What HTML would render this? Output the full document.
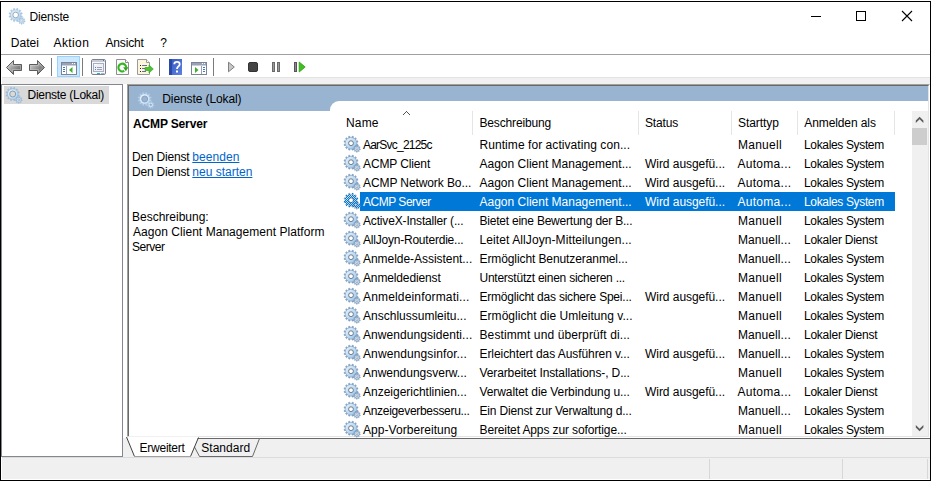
<!DOCTYPE html><html lang="de"><head><meta charset="utf-8"><title>Dienste</title><style>
html,body{margin:0;padding:0}
body{width:932px;height:481px;overflow:hidden;background:#fff;position:relative;font-family:"Liberation Sans",sans-serif;font-size:12px;color:#000}
div,span,svg,a{position:absolute;box-sizing:border-box}
.tx{white-space:nowrap;line-height:16px;height:16px;color:#000;text-decoration:none}
.b{font-weight:bold}
.lnk{color:#0066cc;text-decoration:underline}
.sel{color:#fff}
.ico{overflow:visible}
#list{left:330px;top:101px;width:598px;height:335px;overflow:hidden;background:#fff;border-top-left-radius:9px}

</style></head><body>
<div style="left:0;top:1px;width:931px;height:480px;border:1px solid #000;border-left-color:#000"></div>
<svg class="ico" style="left:9px;top:8px" width="17" height="17" viewBox="0 0 17 17"><defs><linearGradient id="tl" x1="0" y1="0" x2="1" y2="1"><stop offset="0.15" stop-color="#d9ebf8"/><stop offset="0.85" stop-color="#b5d6f1"/></linearGradient></defs><path d="M11.57 7.51 L13.31 8.12 L12.98 9.34 L11.18 8.99 L10.66 9.88 L11.86 11.27 L10.97 12.16 L9.58 10.96 L8.69 11.48 L9.04 13.28 L7.82 13.61 L7.21 11.87 L6.19 11.87 L5.58 13.61 L4.36 13.28 L4.71 11.48 L3.82 10.96 L2.43 12.16 L1.54 11.27 L2.74 9.88 L2.22 8.99 L0.42 9.34 L0.09 8.12 L1.83 7.51 L1.83 6.49 L0.09 5.88 L0.42 4.66 L2.22 5.01 L2.74 4.12 L1.54 2.73 L2.43 1.84 L3.82 3.04 L4.71 2.52 L4.36 0.72 L5.58 0.39 L6.19 2.13 L7.21 2.13 L7.82 0.39 L9.04 0.72 L8.69 2.52 L9.58 3.04 L10.97 1.84 L11.86 2.73 L10.66 4.12 L11.18 5.01 L12.98 4.66 L13.31 5.88 L11.57 6.49Z" fill="#a9c9e6" stroke="#9dbbd8" stroke-width="0.5"/><circle cx="6.7" cy="7.0" r="4.800000000000001" fill="url(#tl)"/><circle cx="6.7" cy="7.0" r="2.8" fill="#fff" stroke="#9aa4b0" stroke-width="0.9"/><path d="M15.10 12.78 L16.19 13.06 L16.02 13.92 L14.90 13.76 L14.55 14.33 L15.21 15.24 L14.52 15.79 L13.77 14.95 L13.14 15.16 L13.05 16.28 L12.17 16.26 L12.14 15.13 L11.52 14.89 L10.73 15.69 L10.07 15.11 L10.77 14.23 L10.45 13.64 L9.33 13.75 L9.20 12.88 L10.30 12.66 L10.44 12.00 L9.51 11.36 L9.97 10.61 L10.96 11.15 L11.48 10.73 L11.18 9.65 L12.01 9.37 L12.43 10.42 L13.09 10.43 L13.56 9.41 L14.38 9.73 L14.02 10.80 L14.52 11.24 L15.54 10.76 L15.96 11.53 L15.00 12.12Z" fill="#a9c9e6" stroke="#9dbbd8" stroke-width="0.4"/><circle cx="12.7" cy="12.8" r="1.9" fill="#d9ebf8"/><circle cx="12.7" cy="12.8" r="1.0" fill="#fff" stroke="#9aa4b0" stroke-width="0.5"/></svg>
<div style="left:811px;top:16px;width:10px;height:1px;background:#000"></div>
<div style="left:856px;top:11px;width:10px;height:10px;border:1px solid #000"></div>
<svg style="left:901px;top:10px" width="12" height="12" viewBox="0 0 12 12"><path d="M1 1L11 11M11 1L1 11" stroke="#000" stroke-width="1.1" fill="none"/></svg>
<div style="left:1px;top:54px;width:929px;height:1px;background:#a0a0a0"></div>
<div style="left:2px;top:77px;width:928px;height:7px;background:#f0f0f0;border-top:1px solid #e3e3e3"></div>
<svg style="left:5px;top:59px" width="42" height="17" viewBox="0 0 42 17"><defs><linearGradient id="ar" x1="0" y1="0" x2="1" y2="1"><stop offset="0.2" stop-color="#c6c6c6"/><stop offset="0.75" stop-color="#747474"/><stop offset="1" stop-color="#9a9a9a"/></linearGradient></defs><path d="M1.500 8.500L8.500 1.500L8.500 5.500L16.500 5.500L16.500 11.500L8.500 11.500L8.500 15.500Z" fill="url(#ar)" stroke="#5c5c5c" stroke-width="1" stroke-linejoin="round"/><path d="M3 8.500L7.500 4L7.500 6.500L15.500 6.500L15.500 10.500L7.500 10.500L7.500 13Z" fill="none" stroke="#d0d0d0" stroke-width="0.700" opacity="0.700"/><path d="M39.500 8.500L32.500 1.500L32.500 5.500L24.500 5.500L24.500 11.500L32.500 11.500L32.500 15.500Z" fill="url(#ar)" stroke="#5c5c5c" stroke-width="1" stroke-linejoin="round"/><path d="M38 8.500L33.500 4L33.500 6.500L25.500 6.500L25.500 10.500L33.500 10.500L33.500 13Z" fill="none" stroke="#d0d0d0" stroke-width="0.700" opacity="0.700"/></svg>
<div style="left:51px;top:58px;width:1px;height:18px;background:#7a7a7a"></div>
<div style="left:57px;top:56px;width:23px;height:21px;background:#cce8ff;border:1px solid #99d1ff"></div>
<svg style="left:61px;top:62px" width="16" height="13" viewBox="0 0 16 13"><rect x="0.5" y="0.5" width="15" height="12" fill="#f4f4f4" stroke="#7b8494"/><rect x="1" y="1" width="14" height="2" fill="#9aa3b5"/><rect x="1" y="3" width="14" height="1" fill="#c9ced8"/><rect x="1" y="4" width="4" height="8" fill="#fff"/><rect x="5" y="4" width="1" height="8" fill="#9aa3b5"/><rect x="2" y="5" width="2" height="1" fill="#3b78c8"/><rect x="2" y="7" width="2" height="1" fill="#3b78c8"/><rect x="2" y="9" width="2" height="1" fill="#3b78c8"/><rect x="6" y="4" width="9" height="8" fill="#fff"/><path d="M11.5 5L8 8L11.5 11Z" fill="#3fae2a"/><rect x="11" y="1" width="1" height="1" fill="#fff"/><rect x="13" y="1" width="1" height="1" fill="#fff"/></svg>
<div style="left:82px;top:58px;width:1px;height:18px;background:#7a7a7a"></div>
<svg style="left:91px;top:59px" width="16" height="16" viewBox="0 0 16 16"><rect x="0.5" y="0.5" width="14" height="15" rx="1.5" fill="#f7f7f9" stroke="#7b8090"/><rect x="1" y="1" width="13" height="2" fill="#c6cbd6"/><rect x="2.5" y="4.500" width="10" height="8" fill="#eef0f5" stroke="#a9afbd"/><rect x="3" y="5" width="3" height="1" fill="#fff"/><rect x="4" y="8" width="1" height="1" fill="#1e90ff"/><rect x="6" y="8" width="5" height="1" fill="#9aa0ae"/><rect x="4" y="10" width="1" height="1" fill="#7b8090"/><rect x="6" y="10" width="5" height="1" fill="#9aa0ae"/><rect x="6" y="14" width="3" height="1" fill="#29a8e0"/><rect x="10" y="14" width="3" height="1" fill="#b0b4bf"/><rect x="12" y="1" width="1" height="1" fill="#4a6fb5"/></svg>
<svg style="left:116px;top:59px" width="14" height="16" viewBox="0 0 14 16"><path d="M0.500 0.500L9.500 0.500L12.500 3.500L12.500 15.500L0.500 15.500Z" fill="#fafafa" stroke="#8e8e8e"/><path d="M9.500 0.500L9.500 3.500L12.500 3.500" fill="#fff" stroke="#8e8e8e"/><path d="M10.200 8.600A3.900 3.900 0 1 0 8.300 11.900" fill="none" stroke="#35b521" stroke-width="2.100"/><path d="M7.200 8.200L12.400 8.200L9.800 12.200Z" fill="#2ea11c"/></svg>
<svg style="left:137px;top:59px" width="17" height="16" viewBox="0 0 17 16"><path d="M0.500 0.500L9.500 0.500L12.500 3.500L12.500 15.500L0.500 15.500Z" fill="#fbf6da" stroke="#9a9a9a"/><path d="M9.500 0.500L9.500 3.500L12.500 3.500" fill="#fffdf0" stroke="#9a9a9a"/><rect x="3" y="6" width="1" height="1" fill="#222"/><rect x="3" y="9" width="1" height="1" fill="#222"/><rect x="3" y="12" width="1" height="1" fill="#222"/><rect x="5" y="6" width="5" height="1" fill="#6c6ca0"/><rect x="5" y="9" width="4" height="1" fill="#6c6ca0"/><rect x="5" y="12" width="4" height="1" fill="#6c6ca0"/><path d="M8 8.500L12 8.500L12 6L16.300 10L12 14L12 11.500L8 11.500Z" fill="#4cc232" stroke="#2f9a1c" stroke-width="0.600"/></svg>
<div style="left:159px;top:58px;width:1px;height:18px;background:#7a7a7a"></div>
<svg style="left:169px;top:59px" width="14" height="16" viewBox="0 0 14 16"><defs><linearGradient id="hq" x1="0" y1="0" x2="1" y2="1"><stop offset="0" stop-color="#3457c0"/><stop offset="1" stop-color="#5d82e0"/></linearGradient></defs><rect x="0" y="0" width="13" height="16" fill="url(#hq)"/><rect x="0" y="0" width="3" height="16" fill="#2a48a8"/><path d="M5.300 5.200C5.300 2.200 10.700 2.200 10.700 5.200C10.700 7.400 8 7.400 8 10" fill="none" stroke="#fff" stroke-width="1.800"/><rect x="7" y="11.500" width="2" height="2" fill="#fff"/></svg>
<svg style="left:191px;top:62px" width="16" height="13" viewBox="0 0 16 13"><rect x="0.5" y="0.5" width="15" height="12" fill="#f4f4f4" stroke="#7b8494"/><rect x="1" y="1" width="14" height="2" fill="#9aa3b5"/><rect x="1" y="3" width="14" height="1" fill="#c9ced8"/><rect x="1" y="4" width="9" height="8" fill="#fff"/><rect x="10" y="4" width="1" height="8" fill="#9aa3b5"/><rect x="11" y="4" width="4" height="8" fill="#fff"/><rect x="12" y="5" width="2" height="1" fill="#3b78c8"/><rect x="12" y="7" width="2" height="1" fill="#3b78c8"/><rect x="12" y="9" width="2" height="1" fill="#3b78c8"/><path d="M4 5L7.500 8L4 11Z" fill="#3fae2a"/><rect x="11" y="1" width="1" height="1" fill="#fff"/><rect x="13" y="1" width="1" height="1" fill="#fff"/></svg>
<div style="left:213px;top:58px;width:1px;height:18px;background:#7a7a7a"></div>
<svg style="left:227px;top:61px" width="9" height="12" viewBox="0 0 9 12"><path d="M1.500 1.200L7.300 6L1.500 10.800Z" fill="#c8c8c8" stroke="#808080" stroke-width="1" stroke-linejoin="round"/></svg>
<div style="left:248px;top:62px;width:10px;height:10px;background:#454545;border:1px solid #333;border-radius:2px"></div>
<div style="left:272px;top:62px;width:3px;height:10px;background:#9a9a9a;border:1px solid #6a6a6a"></div>
<div style="left:277px;top:62px;width:3px;height:10px;background:#9a9a9a;border:1px solid #6a6a6a"></div>
<div style="left:294px;top:62px;width:3px;height:10px;background:#8a8a8a;border:1px solid #555"></div>
<svg style="left:298px;top:61px" width="9" height="12" viewBox="0 0 9 12"><path d="M1.200 1L7.200 6L1.200 11Z" fill="#3fc01f" stroke="#2e9c15" stroke-width="0.800" stroke-linejoin="round"/></svg>

<div style="left:1px;top:84px;width:122px;height:373px;background:#fff;border:1px solid #828790"></div>
<div style="left:4px;top:86px;width:105px;height:18px;background:#d9d9d9"></div>
<svg class="ico" style="left:6px;top:87px" width="17" height="17" viewBox="0 0 17 17"><defs><linearGradient id="trl" x1="0" y1="0" x2="1" y2="1"><stop offset="0.15" stop-color="#d9efff"/><stop offset="0.85" stop-color="#b5dcf8"/></linearGradient></defs><path d="M11.57 7.51 L13.31 8.12 L12.98 9.34 L11.18 8.99 L10.66 9.88 L11.86 11.27 L10.97 12.16 L9.58 10.96 L8.69 11.48 L9.04 13.28 L7.82 13.61 L7.21 11.87 L6.19 11.87 L5.58 13.61 L4.36 13.28 L4.71 11.48 L3.82 10.96 L2.43 12.16 L1.54 11.27 L2.74 9.88 L2.22 8.99 L0.42 9.34 L0.09 8.12 L1.83 7.51 L1.83 6.49 L0.09 5.88 L0.42 4.66 L2.22 5.01 L2.74 4.12 L1.54 2.73 L2.43 1.84 L3.82 3.04 L4.71 2.52 L4.36 0.72 L5.58 0.39 L6.19 2.13 L7.21 2.13 L7.82 0.39 L9.04 0.72 L8.69 2.52 L9.58 3.04 L10.97 1.84 L11.86 2.73 L10.66 4.12 L11.18 5.01 L12.98 4.66 L13.31 5.88 L11.57 6.49Z" fill="#9dc0e0" stroke="#8fb0d2" stroke-width="0.5"/><circle cx="6.7" cy="7.0" r="4.800000000000001" fill="url(#trl)"/><circle cx="6.7" cy="7.0" r="3.0" fill="#d9d9d9" stroke="#8a929c" stroke-width="0.9"/><path d="M15.10 12.78 L16.19 13.06 L16.02 13.92 L14.90 13.76 L14.55 14.33 L15.21 15.24 L14.52 15.79 L13.77 14.95 L13.14 15.16 L13.05 16.28 L12.17 16.26 L12.14 15.13 L11.52 14.89 L10.73 15.69 L10.07 15.11 L10.77 14.23 L10.45 13.64 L9.33 13.75 L9.20 12.88 L10.30 12.66 L10.44 12.00 L9.51 11.36 L9.97 10.61 L10.96 11.15 L11.48 10.73 L11.18 9.65 L12.01 9.37 L12.43 10.42 L13.09 10.43 L13.56 9.41 L14.38 9.73 L14.02 10.80 L14.52 11.24 L15.54 10.76 L15.96 11.53 L15.00 12.12Z" fill="#9dc0e0" stroke="#8fb0d2" stroke-width="0.4"/><circle cx="12.7" cy="12.8" r="1.9" fill="#d9efff"/><circle cx="12.7" cy="12.8" r="1.0" fill="#d9d9d9" stroke="#8a929c" stroke-width="0.5"/></svg>
<div style="left:127px;top:84px;width:803px;height:354px;background:#fff;border:1px solid #a0a0a0;border-right-color:#fff;border-bottom-color:#fff"></div>
<div style="left:128px;top:85px;width:801px;height:352px;border:1px solid #696969;border-right-color:#e3e3e3;border-bottom-color:#e3e3e3"></div>
<div style="left:129px;top:86px;width:799px;height:25px;background:#99b4d1"></div>
<svg class="ico" style="left:138px;top:91.5px" width="17" height="17" viewBox="0 0 17 17"><defs><linearGradient id="hl" x1="0" y1="0" x2="1" y2="1"><stop offset="0.15" stop-color="#e4f3ff"/><stop offset="0.85" stop-color="#c6e2f9"/></linearGradient></defs><path d="M11.57 7.51 L13.31 8.12 L12.98 9.34 L11.18 8.99 L10.66 9.88 L11.86 11.27 L10.97 12.16 L9.58 10.96 L8.69 11.48 L9.04 13.28 L7.82 13.61 L7.21 11.87 L6.19 11.87 L5.58 13.61 L4.36 13.28 L4.71 11.48 L3.82 10.96 L2.43 12.16 L1.54 11.27 L2.74 9.88 L2.22 8.99 L0.42 9.34 L0.09 8.12 L1.83 7.51 L1.83 6.49 L0.09 5.88 L0.42 4.66 L2.22 5.01 L2.74 4.12 L1.54 2.73 L2.43 1.84 L3.82 3.04 L4.71 2.52 L4.36 0.72 L5.58 0.39 L6.19 2.13 L7.21 2.13 L7.82 0.39 L9.04 0.72 L8.69 2.52 L9.58 3.04 L10.97 1.84 L11.86 2.73 L10.66 4.12 L11.18 5.01 L12.98 4.66 L13.31 5.88 L11.57 6.49Z" fill="#b9d5ef" stroke="#a9c4df" stroke-width="0.5"/><circle cx="6.7" cy="7.0" r="4.800000000000001" fill="url(#hl)"/><circle cx="6.7" cy="7.0" r="3.0" fill="#99b4d1" stroke="#8b9db4" stroke-width="0.9"/><path d="M15.10 12.78 L16.19 13.06 L16.02 13.92 L14.90 13.76 L14.55 14.33 L15.21 15.24 L14.52 15.79 L13.77 14.95 L13.14 15.16 L13.05 16.28 L12.17 16.26 L12.14 15.13 L11.52 14.89 L10.73 15.69 L10.07 15.11 L10.77 14.23 L10.45 13.64 L9.33 13.75 L9.20 12.88 L10.30 12.66 L10.44 12.00 L9.51 11.36 L9.97 10.61 L10.96 11.15 L11.48 10.73 L11.18 9.65 L12.01 9.37 L12.43 10.42 L13.09 10.43 L13.56 9.41 L14.38 9.73 L14.02 10.80 L14.52 11.24 L15.54 10.76 L15.96 11.53 L15.00 12.12Z" fill="#b9d5ef" stroke="#a9c4df" stroke-width="0.4"/><circle cx="12.7" cy="12.8" r="1.9" fill="#e4f3ff"/><circle cx="12.7" cy="12.8" r="1.0" fill="#99b4d1" stroke="#8b9db4" stroke-width="0.5"/></svg>
<div id="list"></div>
<div style="left:472px;top:111px;width:1px;height:24px;background:#e5e5e5"></div>
<div style="left:638px;top:111px;width:1px;height:24px;background:#e5e5e5"></div>
<div style="left:731px;top:111px;width:1px;height:24px;background:#e5e5e5"></div>
<div style="left:797px;top:111px;width:1px;height:24px;background:#e5e5e5"></div>
<div style="left:894px;top:111px;width:1px;height:24px;background:#e5e5e5"></div>
<svg style="left:403px;top:111px" width="7" height="4" viewBox="0 0 7 4" shape-rendering="crispEdges"><path d="M3 0h1v1h-1zM2 1h1v1h-1zM4 1h1v1h-1zM1 2h1v1h-1zM5 2h1v1h-1zM0 3h1v1h-1zM6 3h1v1h-1z" fill="#555"/></svg>
<div style="left:360px;top:192px;width:535px;height:19px;background:#0078d7"></div>
<svg class="ico" style="left:344px;top:136px" width="17" height="17" viewBox="0 0 17 17"><defs><linearGradient id="r0l" x1="0" y1="0" x2="1" y2="1"><stop offset="0.15" stop-color="#ddecf8"/><stop offset="0.85" stop-color="#a6cbeb"/></linearGradient></defs><path d="M12.57 7.79 L14.00 8.38 L13.65 9.67 L12.12 9.48 L11.53 10.49 L12.47 11.73 L11.53 12.67 L10.29 11.73 L9.28 12.32 L9.47 13.85 L8.18 14.20 L7.59 12.77 L6.41 12.77 L5.82 14.20 L4.53 13.85 L4.72 12.32 L3.71 11.73 L2.47 12.67 L1.53 11.73 L2.47 10.49 L1.88 9.48 L0.35 9.67 L-0.00 8.38 L1.43 7.79 L1.43 6.61 L-0.00 6.02 L0.35 4.73 L1.88 4.92 L2.47 3.91 L1.53 2.67 L2.47 1.73 L3.71 2.67 L4.72 2.08 L4.53 0.55 L5.82 0.20 L6.41 1.63 L7.59 1.63 L8.18 0.20 L9.47 0.55 L9.28 2.08 L10.29 2.67 L11.53 1.73 L12.47 2.67 L11.53 3.91 L12.12 4.92 L13.65 4.73 L14.00 6.02 L12.57 6.61Z" fill="#89a8c9" stroke="#7190b4" stroke-width="0.5"/><circle cx="7.0" cy="7.2" r="5.5" fill="url(#r0l)"/><circle cx="7.0" cy="7.2" r="2.4" fill="#fff" stroke="#5f6f84" stroke-width="0.9"/><path d="M15.40 12.68 L16.39 12.96 L16.22 13.82 L15.19 13.70 L14.83 14.29 L15.41 15.14 L14.72 15.69 L14.02 14.94 L13.36 15.16 L13.25 16.18 L12.37 16.16 L12.32 15.13 L11.67 14.88 L10.93 15.59 L10.27 15.01 L10.89 14.19 L10.56 13.58 L9.53 13.65 L9.40 12.78 L10.40 12.55 L10.54 11.87 L9.71 11.26 L10.17 10.51 L11.09 10.98 L11.63 10.55 L11.38 9.55 L12.21 9.27 L12.62 10.22 L13.31 10.23 L13.76 9.31 L14.58 9.63 L14.28 10.61 L14.80 11.08 L15.74 10.66 L16.16 11.43 L15.30 11.99Z" fill="#89a8c9" stroke="#7190b4" stroke-width="0.4"/><circle cx="12.9" cy="12.7" r="2.0" fill="#ddecf8"/><circle cx="12.9" cy="12.7" r="1.0" fill="#fff" stroke="#5f6f84" stroke-width="0.5"/></svg>
<svg class="ico" style="left:344px;top:155px" width="17" height="17" viewBox="0 0 17 17"><defs><linearGradient id="r1l" x1="0" y1="0" x2="1" y2="1"><stop offset="0.15" stop-color="#ddecf8"/><stop offset="0.85" stop-color="#a6cbeb"/></linearGradient></defs><path d="M12.57 7.79 L14.00 8.38 L13.65 9.67 L12.12 9.48 L11.53 10.49 L12.47 11.73 L11.53 12.67 L10.29 11.73 L9.28 12.32 L9.47 13.85 L8.18 14.20 L7.59 12.77 L6.41 12.77 L5.82 14.20 L4.53 13.85 L4.72 12.32 L3.71 11.73 L2.47 12.67 L1.53 11.73 L2.47 10.49 L1.88 9.48 L0.35 9.67 L-0.00 8.38 L1.43 7.79 L1.43 6.61 L-0.00 6.02 L0.35 4.73 L1.88 4.92 L2.47 3.91 L1.53 2.67 L2.47 1.73 L3.71 2.67 L4.72 2.08 L4.53 0.55 L5.82 0.20 L6.41 1.63 L7.59 1.63 L8.18 0.20 L9.47 0.55 L9.28 2.08 L10.29 2.67 L11.53 1.73 L12.47 2.67 L11.53 3.91 L12.12 4.92 L13.65 4.73 L14.00 6.02 L12.57 6.61Z" fill="#89a8c9" stroke="#7190b4" stroke-width="0.5"/><circle cx="7.0" cy="7.2" r="5.5" fill="url(#r1l)"/><circle cx="7.0" cy="7.2" r="2.4" fill="#fff" stroke="#5f6f84" stroke-width="0.9"/><path d="M15.40 12.68 L16.39 12.96 L16.22 13.82 L15.19 13.70 L14.83 14.29 L15.41 15.14 L14.72 15.69 L14.02 14.94 L13.36 15.16 L13.25 16.18 L12.37 16.16 L12.32 15.13 L11.67 14.88 L10.93 15.59 L10.27 15.01 L10.89 14.19 L10.56 13.58 L9.53 13.65 L9.40 12.78 L10.40 12.55 L10.54 11.87 L9.71 11.26 L10.17 10.51 L11.09 10.98 L11.63 10.55 L11.38 9.55 L12.21 9.27 L12.62 10.22 L13.31 10.23 L13.76 9.31 L14.58 9.63 L14.28 10.61 L14.80 11.08 L15.74 10.66 L16.16 11.43 L15.30 11.99Z" fill="#89a8c9" stroke="#7190b4" stroke-width="0.4"/><circle cx="12.9" cy="12.7" r="2.0" fill="#ddecf8"/><circle cx="12.9" cy="12.7" r="1.0" fill="#fff" stroke="#5f6f84" stroke-width="0.5"/></svg>
<svg class="ico" style="left:344px;top:174px" width="17" height="17" viewBox="0 0 17 17"><defs><linearGradient id="r2l" x1="0" y1="0" x2="1" y2="1"><stop offset="0.15" stop-color="#ddecf8"/><stop offset="0.85" stop-color="#a6cbeb"/></linearGradient></defs><path d="M12.57 7.79 L14.00 8.38 L13.65 9.67 L12.12 9.48 L11.53 10.49 L12.47 11.73 L11.53 12.67 L10.29 11.73 L9.28 12.32 L9.47 13.85 L8.18 14.20 L7.59 12.77 L6.41 12.77 L5.82 14.20 L4.53 13.85 L4.72 12.32 L3.71 11.73 L2.47 12.67 L1.53 11.73 L2.47 10.49 L1.88 9.48 L0.35 9.67 L-0.00 8.38 L1.43 7.79 L1.43 6.61 L-0.00 6.02 L0.35 4.73 L1.88 4.92 L2.47 3.91 L1.53 2.67 L2.47 1.73 L3.71 2.67 L4.72 2.08 L4.53 0.55 L5.82 0.20 L6.41 1.63 L7.59 1.63 L8.18 0.20 L9.47 0.55 L9.28 2.08 L10.29 2.67 L11.53 1.73 L12.47 2.67 L11.53 3.91 L12.12 4.92 L13.65 4.73 L14.00 6.02 L12.57 6.61Z" fill="#89a8c9" stroke="#7190b4" stroke-width="0.5"/><circle cx="7.0" cy="7.2" r="5.5" fill="url(#r2l)"/><circle cx="7.0" cy="7.2" r="2.4" fill="#fff" stroke="#5f6f84" stroke-width="0.9"/><path d="M15.40 12.68 L16.39 12.96 L16.22 13.82 L15.19 13.70 L14.83 14.29 L15.41 15.14 L14.72 15.69 L14.02 14.94 L13.36 15.16 L13.25 16.18 L12.37 16.16 L12.32 15.13 L11.67 14.88 L10.93 15.59 L10.27 15.01 L10.89 14.19 L10.56 13.58 L9.53 13.65 L9.40 12.78 L10.40 12.55 L10.54 11.87 L9.71 11.26 L10.17 10.51 L11.09 10.98 L11.63 10.55 L11.38 9.55 L12.21 9.27 L12.62 10.22 L13.31 10.23 L13.76 9.31 L14.58 9.63 L14.28 10.61 L14.80 11.08 L15.74 10.66 L16.16 11.43 L15.30 11.99Z" fill="#89a8c9" stroke="#7190b4" stroke-width="0.4"/><circle cx="12.9" cy="12.7" r="2.0" fill="#ddecf8"/><circle cx="12.9" cy="12.7" r="1.0" fill="#fff" stroke="#5f6f84" stroke-width="0.5"/></svg>
<svg class="ico" style="left:344px;top:193px" width="17" height="17" viewBox="0 0 17 17"><defs><linearGradient id="r3l" x1="0" y1="0" x2="1" y2="1"><stop offset="0.15" stop-color="#ddecf8"/><stop offset="0.85" stop-color="#a6cbeb"/></linearGradient></defs><path d="M12.57 7.79 L14.00 8.38 L13.65 9.67 L12.12 9.48 L11.53 10.49 L12.47 11.73 L11.53 12.67 L10.29 11.73 L9.28 12.32 L9.47 13.85 L8.18 14.20 L7.59 12.77 L6.41 12.77 L5.82 14.20 L4.53 13.85 L4.72 12.32 L3.71 11.73 L2.47 12.67 L1.53 11.73 L2.47 10.49 L1.88 9.48 L0.35 9.67 L-0.00 8.38 L1.43 7.79 L1.43 6.61 L-0.00 6.02 L0.35 4.73 L1.88 4.92 L2.47 3.91 L1.53 2.67 L2.47 1.73 L3.71 2.67 L4.72 2.08 L4.53 0.55 L5.82 0.20 L6.41 1.63 L7.59 1.63 L8.18 0.20 L9.47 0.55 L9.28 2.08 L10.29 2.67 L11.53 1.73 L12.47 2.67 L11.53 3.91 L12.12 4.92 L13.65 4.73 L14.00 6.02 L12.57 6.61Z" fill="#89a8c9" stroke="#7190b4" stroke-width="0.5"/><circle cx="7.0" cy="7.2" r="5.5" fill="url(#r3l)"/><circle cx="7.0" cy="7.2" r="2.4" fill="#fff" stroke="#5f6f84" stroke-width="0.9"/><path d="M15.40 12.68 L16.39 12.96 L16.22 13.82 L15.19 13.70 L14.83 14.29 L15.41 15.14 L14.72 15.69 L14.02 14.94 L13.36 15.16 L13.25 16.18 L12.37 16.16 L12.32 15.13 L11.67 14.88 L10.93 15.59 L10.27 15.01 L10.89 14.19 L10.56 13.58 L9.53 13.65 L9.40 12.78 L10.40 12.55 L10.54 11.87 L9.71 11.26 L10.17 10.51 L11.09 10.98 L11.63 10.55 L11.38 9.55 L12.21 9.27 L12.62 10.22 L13.31 10.23 L13.76 9.31 L14.58 9.63 L14.28 10.61 L14.80 11.08 L15.74 10.66 L16.16 11.43 L15.30 11.99Z" fill="#89a8c9" stroke="#7190b4" stroke-width="0.4"/><circle cx="12.9" cy="12.7" r="2.0" fill="#ddecf8"/><circle cx="12.9" cy="12.7" r="1.0" fill="#fff" stroke="#5f6f84" stroke-width="0.5"/><defs><pattern id="r3p" width="2" height="2" patternUnits="userSpaceOnUse"><rect width="1" height="1" fill="#0078d7" shape-rendering="crispEdges"/><rect x="1" y="1" width="1" height="1" fill="#0078d7" shape-rendering="crispEdges"/></pattern></defs><path d="M12.57 7.79 L14.00 8.38 L13.65 9.67 L12.12 9.48 L11.53 10.49 L12.47 11.73 L11.53 12.67 L10.29 11.73 L9.28 12.32 L9.47 13.85 L8.18 14.20 L7.59 12.77 L6.41 12.77 L5.82 14.20 L4.53 13.85 L4.72 12.32 L3.71 11.73 L2.47 12.67 L1.53 11.73 L2.47 10.49 L1.88 9.48 L0.35 9.67 L-0.00 8.38 L1.43 7.79 L1.43 6.61 L-0.00 6.02 L0.35 4.73 L1.88 4.92 L2.47 3.91 L1.53 2.67 L2.47 1.73 L3.71 2.67 L4.72 2.08 L4.53 0.55 L5.82 0.20 L6.41 1.63 L7.59 1.63 L8.18 0.20 L9.47 0.55 L9.28 2.08 L10.29 2.67 L11.53 1.73 L12.47 2.67 L11.53 3.91 L12.12 4.92 L13.65 4.73 L14.00 6.02 L12.57 6.61ZM4.90 7.2a2.10 2.10 0 1 0 4.20 0a2.10 2.10 0 1 0 -4.20 0ZM15.40 12.68 L16.39 12.96 L16.22 13.82 L15.19 13.70 L14.83 14.29 L15.41 15.14 L14.72 15.69 L14.02 14.94 L13.36 15.16 L13.25 16.18 L12.37 16.16 L12.32 15.13 L11.67 14.88 L10.93 15.59 L10.27 15.01 L10.89 14.19 L10.56 13.58 L9.53 13.65 L9.40 12.78 L10.40 12.55 L10.54 11.87 L9.71 11.26 L10.17 10.51 L11.09 10.98 L11.63 10.55 L11.38 9.55 L12.21 9.27 L12.62 10.22 L13.31 10.23 L13.76 9.31 L14.58 9.63 L14.28 10.61 L14.80 11.08 L15.74 10.66 L16.16 11.43 L15.30 11.99Z" fill="url(#r3p)" fill-rule="evenodd" shape-rendering="crispEdges"/></svg>
<svg class="ico" style="left:344px;top:212px" width="17" height="17" viewBox="0 0 17 17"><defs><linearGradient id="r4l" x1="0" y1="0" x2="1" y2="1"><stop offset="0.15" stop-color="#ddecf8"/><stop offset="0.85" stop-color="#a6cbeb"/></linearGradient></defs><path d="M12.57 7.79 L14.00 8.38 L13.65 9.67 L12.12 9.48 L11.53 10.49 L12.47 11.73 L11.53 12.67 L10.29 11.73 L9.28 12.32 L9.47 13.85 L8.18 14.20 L7.59 12.77 L6.41 12.77 L5.82 14.20 L4.53 13.85 L4.72 12.32 L3.71 11.73 L2.47 12.67 L1.53 11.73 L2.47 10.49 L1.88 9.48 L0.35 9.67 L-0.00 8.38 L1.43 7.79 L1.43 6.61 L-0.00 6.02 L0.35 4.73 L1.88 4.92 L2.47 3.91 L1.53 2.67 L2.47 1.73 L3.71 2.67 L4.72 2.08 L4.53 0.55 L5.82 0.20 L6.41 1.63 L7.59 1.63 L8.18 0.20 L9.47 0.55 L9.28 2.08 L10.29 2.67 L11.53 1.73 L12.47 2.67 L11.53 3.91 L12.12 4.92 L13.65 4.73 L14.00 6.02 L12.57 6.61Z" fill="#89a8c9" stroke="#7190b4" stroke-width="0.5"/><circle cx="7.0" cy="7.2" r="5.5" fill="url(#r4l)"/><circle cx="7.0" cy="7.2" r="2.4" fill="#fff" stroke="#5f6f84" stroke-width="0.9"/><path d="M15.40 12.68 L16.39 12.96 L16.22 13.82 L15.19 13.70 L14.83 14.29 L15.41 15.14 L14.72 15.69 L14.02 14.94 L13.36 15.16 L13.25 16.18 L12.37 16.16 L12.32 15.13 L11.67 14.88 L10.93 15.59 L10.27 15.01 L10.89 14.19 L10.56 13.58 L9.53 13.65 L9.40 12.78 L10.40 12.55 L10.54 11.87 L9.71 11.26 L10.17 10.51 L11.09 10.98 L11.63 10.55 L11.38 9.55 L12.21 9.27 L12.62 10.22 L13.31 10.23 L13.76 9.31 L14.58 9.63 L14.28 10.61 L14.80 11.08 L15.74 10.66 L16.16 11.43 L15.30 11.99Z" fill="#89a8c9" stroke="#7190b4" stroke-width="0.4"/><circle cx="12.9" cy="12.7" r="2.0" fill="#ddecf8"/><circle cx="12.9" cy="12.7" r="1.0" fill="#fff" stroke="#5f6f84" stroke-width="0.5"/></svg>
<svg class="ico" style="left:344px;top:231px" width="17" height="17" viewBox="0 0 17 17"><defs><linearGradient id="r5l" x1="0" y1="0" x2="1" y2="1"><stop offset="0.15" stop-color="#ddecf8"/><stop offset="0.85" stop-color="#a6cbeb"/></linearGradient></defs><path d="M12.57 7.79 L14.00 8.38 L13.65 9.67 L12.12 9.48 L11.53 10.49 L12.47 11.73 L11.53 12.67 L10.29 11.73 L9.28 12.32 L9.47 13.85 L8.18 14.20 L7.59 12.77 L6.41 12.77 L5.82 14.20 L4.53 13.85 L4.72 12.32 L3.71 11.73 L2.47 12.67 L1.53 11.73 L2.47 10.49 L1.88 9.48 L0.35 9.67 L-0.00 8.38 L1.43 7.79 L1.43 6.61 L-0.00 6.02 L0.35 4.73 L1.88 4.92 L2.47 3.91 L1.53 2.67 L2.47 1.73 L3.71 2.67 L4.72 2.08 L4.53 0.55 L5.82 0.20 L6.41 1.63 L7.59 1.63 L8.18 0.20 L9.47 0.55 L9.28 2.08 L10.29 2.67 L11.53 1.73 L12.47 2.67 L11.53 3.91 L12.12 4.92 L13.65 4.73 L14.00 6.02 L12.57 6.61Z" fill="#89a8c9" stroke="#7190b4" stroke-width="0.5"/><circle cx="7.0" cy="7.2" r="5.5" fill="url(#r5l)"/><circle cx="7.0" cy="7.2" r="2.4" fill="#fff" stroke="#5f6f84" stroke-width="0.9"/><path d="M15.40 12.68 L16.39 12.96 L16.22 13.82 L15.19 13.70 L14.83 14.29 L15.41 15.14 L14.72 15.69 L14.02 14.94 L13.36 15.16 L13.25 16.18 L12.37 16.16 L12.32 15.13 L11.67 14.88 L10.93 15.59 L10.27 15.01 L10.89 14.19 L10.56 13.58 L9.53 13.65 L9.40 12.78 L10.40 12.55 L10.54 11.87 L9.71 11.26 L10.17 10.51 L11.09 10.98 L11.63 10.55 L11.38 9.55 L12.21 9.27 L12.62 10.22 L13.31 10.23 L13.76 9.31 L14.58 9.63 L14.28 10.61 L14.80 11.08 L15.74 10.66 L16.16 11.43 L15.30 11.99Z" fill="#89a8c9" stroke="#7190b4" stroke-width="0.4"/><circle cx="12.9" cy="12.7" r="2.0" fill="#ddecf8"/><circle cx="12.9" cy="12.7" r="1.0" fill="#fff" stroke="#5f6f84" stroke-width="0.5"/></svg>
<svg class="ico" style="left:344px;top:250px" width="17" height="17" viewBox="0 0 17 17"><defs><linearGradient id="r6l" x1="0" y1="0" x2="1" y2="1"><stop offset="0.15" stop-color="#ddecf8"/><stop offset="0.85" stop-color="#a6cbeb"/></linearGradient></defs><path d="M12.57 7.79 L14.00 8.38 L13.65 9.67 L12.12 9.48 L11.53 10.49 L12.47 11.73 L11.53 12.67 L10.29 11.73 L9.28 12.32 L9.47 13.85 L8.18 14.20 L7.59 12.77 L6.41 12.77 L5.82 14.20 L4.53 13.85 L4.72 12.32 L3.71 11.73 L2.47 12.67 L1.53 11.73 L2.47 10.49 L1.88 9.48 L0.35 9.67 L-0.00 8.38 L1.43 7.79 L1.43 6.61 L-0.00 6.02 L0.35 4.73 L1.88 4.92 L2.47 3.91 L1.53 2.67 L2.47 1.73 L3.71 2.67 L4.72 2.08 L4.53 0.55 L5.82 0.20 L6.41 1.63 L7.59 1.63 L8.18 0.20 L9.47 0.55 L9.28 2.08 L10.29 2.67 L11.53 1.73 L12.47 2.67 L11.53 3.91 L12.12 4.92 L13.65 4.73 L14.00 6.02 L12.57 6.61Z" fill="#89a8c9" stroke="#7190b4" stroke-width="0.5"/><circle cx="7.0" cy="7.2" r="5.5" fill="url(#r6l)"/><circle cx="7.0" cy="7.2" r="2.4" fill="#fff" stroke="#5f6f84" stroke-width="0.9"/><path d="M15.40 12.68 L16.39 12.96 L16.22 13.82 L15.19 13.70 L14.83 14.29 L15.41 15.14 L14.72 15.69 L14.02 14.94 L13.36 15.16 L13.25 16.18 L12.37 16.16 L12.32 15.13 L11.67 14.88 L10.93 15.59 L10.27 15.01 L10.89 14.19 L10.56 13.58 L9.53 13.65 L9.40 12.78 L10.40 12.55 L10.54 11.87 L9.71 11.26 L10.17 10.51 L11.09 10.98 L11.63 10.55 L11.38 9.55 L12.21 9.27 L12.62 10.22 L13.31 10.23 L13.76 9.31 L14.58 9.63 L14.28 10.61 L14.80 11.08 L15.74 10.66 L16.16 11.43 L15.30 11.99Z" fill="#89a8c9" stroke="#7190b4" stroke-width="0.4"/><circle cx="12.9" cy="12.7" r="2.0" fill="#ddecf8"/><circle cx="12.9" cy="12.7" r="1.0" fill="#fff" stroke="#5f6f84" stroke-width="0.5"/></svg>
<svg class="ico" style="left:344px;top:269px" width="17" height="17" viewBox="0 0 17 17"><defs><linearGradient id="r7l" x1="0" y1="0" x2="1" y2="1"><stop offset="0.15" stop-color="#ddecf8"/><stop offset="0.85" stop-color="#a6cbeb"/></linearGradient></defs><path d="M12.57 7.79 L14.00 8.38 L13.65 9.67 L12.12 9.48 L11.53 10.49 L12.47 11.73 L11.53 12.67 L10.29 11.73 L9.28 12.32 L9.47 13.85 L8.18 14.20 L7.59 12.77 L6.41 12.77 L5.82 14.20 L4.53 13.85 L4.72 12.32 L3.71 11.73 L2.47 12.67 L1.53 11.73 L2.47 10.49 L1.88 9.48 L0.35 9.67 L-0.00 8.38 L1.43 7.79 L1.43 6.61 L-0.00 6.02 L0.35 4.73 L1.88 4.92 L2.47 3.91 L1.53 2.67 L2.47 1.73 L3.71 2.67 L4.72 2.08 L4.53 0.55 L5.82 0.20 L6.41 1.63 L7.59 1.63 L8.18 0.20 L9.47 0.55 L9.28 2.08 L10.29 2.67 L11.53 1.73 L12.47 2.67 L11.53 3.91 L12.12 4.92 L13.65 4.73 L14.00 6.02 L12.57 6.61Z" fill="#89a8c9" stroke="#7190b4" stroke-width="0.5"/><circle cx="7.0" cy="7.2" r="5.5" fill="url(#r7l)"/><circle cx="7.0" cy="7.2" r="2.4" fill="#fff" stroke="#5f6f84" stroke-width="0.9"/><path d="M15.40 12.68 L16.39 12.96 L16.22 13.82 L15.19 13.70 L14.83 14.29 L15.41 15.14 L14.72 15.69 L14.02 14.94 L13.36 15.16 L13.25 16.18 L12.37 16.16 L12.32 15.13 L11.67 14.88 L10.93 15.59 L10.27 15.01 L10.89 14.19 L10.56 13.58 L9.53 13.65 L9.40 12.78 L10.40 12.55 L10.54 11.87 L9.71 11.26 L10.17 10.51 L11.09 10.98 L11.63 10.55 L11.38 9.55 L12.21 9.27 L12.62 10.22 L13.31 10.23 L13.76 9.31 L14.58 9.63 L14.28 10.61 L14.80 11.08 L15.74 10.66 L16.16 11.43 L15.30 11.99Z" fill="#89a8c9" stroke="#7190b4" stroke-width="0.4"/><circle cx="12.9" cy="12.7" r="2.0" fill="#ddecf8"/><circle cx="12.9" cy="12.7" r="1.0" fill="#fff" stroke="#5f6f84" stroke-width="0.5"/></svg>
<svg class="ico" style="left:344px;top:288px" width="17" height="17" viewBox="0 0 17 17"><defs><linearGradient id="r8l" x1="0" y1="0" x2="1" y2="1"><stop offset="0.15" stop-color="#ddecf8"/><stop offset="0.85" stop-color="#a6cbeb"/></linearGradient></defs><path d="M12.57 7.79 L14.00 8.38 L13.65 9.67 L12.12 9.48 L11.53 10.49 L12.47 11.73 L11.53 12.67 L10.29 11.73 L9.28 12.32 L9.47 13.85 L8.18 14.20 L7.59 12.77 L6.41 12.77 L5.82 14.20 L4.53 13.85 L4.72 12.32 L3.71 11.73 L2.47 12.67 L1.53 11.73 L2.47 10.49 L1.88 9.48 L0.35 9.67 L-0.00 8.38 L1.43 7.79 L1.43 6.61 L-0.00 6.02 L0.35 4.73 L1.88 4.92 L2.47 3.91 L1.53 2.67 L2.47 1.73 L3.71 2.67 L4.72 2.08 L4.53 0.55 L5.82 0.20 L6.41 1.63 L7.59 1.63 L8.18 0.20 L9.47 0.55 L9.28 2.08 L10.29 2.67 L11.53 1.73 L12.47 2.67 L11.53 3.91 L12.12 4.92 L13.65 4.73 L14.00 6.02 L12.57 6.61Z" fill="#89a8c9" stroke="#7190b4" stroke-width="0.5"/><circle cx="7.0" cy="7.2" r="5.5" fill="url(#r8l)"/><circle cx="7.0" cy="7.2" r="2.4" fill="#fff" stroke="#5f6f84" stroke-width="0.9"/><path d="M15.40 12.68 L16.39 12.96 L16.22 13.82 L15.19 13.70 L14.83 14.29 L15.41 15.14 L14.72 15.69 L14.02 14.94 L13.36 15.16 L13.25 16.18 L12.37 16.16 L12.32 15.13 L11.67 14.88 L10.93 15.59 L10.27 15.01 L10.89 14.19 L10.56 13.58 L9.53 13.65 L9.40 12.78 L10.40 12.55 L10.54 11.87 L9.71 11.26 L10.17 10.51 L11.09 10.98 L11.63 10.55 L11.38 9.55 L12.21 9.27 L12.62 10.22 L13.31 10.23 L13.76 9.31 L14.58 9.63 L14.28 10.61 L14.80 11.08 L15.74 10.66 L16.16 11.43 L15.30 11.99Z" fill="#89a8c9" stroke="#7190b4" stroke-width="0.4"/><circle cx="12.9" cy="12.7" r="2.0" fill="#ddecf8"/><circle cx="12.9" cy="12.7" r="1.0" fill="#fff" stroke="#5f6f84" stroke-width="0.5"/></svg>
<svg class="ico" style="left:344px;top:307px" width="17" height="17" viewBox="0 0 17 17"><defs><linearGradient id="r9l" x1="0" y1="0" x2="1" y2="1"><stop offset="0.15" stop-color="#ddecf8"/><stop offset="0.85" stop-color="#a6cbeb"/></linearGradient></defs><path d="M12.57 7.79 L14.00 8.38 L13.65 9.67 L12.12 9.48 L11.53 10.49 L12.47 11.73 L11.53 12.67 L10.29 11.73 L9.28 12.32 L9.47 13.85 L8.18 14.20 L7.59 12.77 L6.41 12.77 L5.82 14.20 L4.53 13.85 L4.72 12.32 L3.71 11.73 L2.47 12.67 L1.53 11.73 L2.47 10.49 L1.88 9.48 L0.35 9.67 L-0.00 8.38 L1.43 7.79 L1.43 6.61 L-0.00 6.02 L0.35 4.73 L1.88 4.92 L2.47 3.91 L1.53 2.67 L2.47 1.73 L3.71 2.67 L4.72 2.08 L4.53 0.55 L5.82 0.20 L6.41 1.63 L7.59 1.63 L8.18 0.20 L9.47 0.55 L9.28 2.08 L10.29 2.67 L11.53 1.73 L12.47 2.67 L11.53 3.91 L12.12 4.92 L13.65 4.73 L14.00 6.02 L12.57 6.61Z" fill="#89a8c9" stroke="#7190b4" stroke-width="0.5"/><circle cx="7.0" cy="7.2" r="5.5" fill="url(#r9l)"/><circle cx="7.0" cy="7.2" r="2.4" fill="#fff" stroke="#5f6f84" stroke-width="0.9"/><path d="M15.40 12.68 L16.39 12.96 L16.22 13.82 L15.19 13.70 L14.83 14.29 L15.41 15.14 L14.72 15.69 L14.02 14.94 L13.36 15.16 L13.25 16.18 L12.37 16.16 L12.32 15.13 L11.67 14.88 L10.93 15.59 L10.27 15.01 L10.89 14.19 L10.56 13.58 L9.53 13.65 L9.40 12.78 L10.40 12.55 L10.54 11.87 L9.71 11.26 L10.17 10.51 L11.09 10.98 L11.63 10.55 L11.38 9.55 L12.21 9.27 L12.62 10.22 L13.31 10.23 L13.76 9.31 L14.58 9.63 L14.28 10.61 L14.80 11.08 L15.74 10.66 L16.16 11.43 L15.30 11.99Z" fill="#89a8c9" stroke="#7190b4" stroke-width="0.4"/><circle cx="12.9" cy="12.7" r="2.0" fill="#ddecf8"/><circle cx="12.9" cy="12.7" r="1.0" fill="#fff" stroke="#5f6f84" stroke-width="0.5"/></svg>
<svg class="ico" style="left:344px;top:326px" width="17" height="17" viewBox="0 0 17 17"><defs><linearGradient id="r10l" x1="0" y1="0" x2="1" y2="1"><stop offset="0.15" stop-color="#ddecf8"/><stop offset="0.85" stop-color="#a6cbeb"/></linearGradient></defs><path d="M12.57 7.79 L14.00 8.38 L13.65 9.67 L12.12 9.48 L11.53 10.49 L12.47 11.73 L11.53 12.67 L10.29 11.73 L9.28 12.32 L9.47 13.85 L8.18 14.20 L7.59 12.77 L6.41 12.77 L5.82 14.20 L4.53 13.85 L4.72 12.32 L3.71 11.73 L2.47 12.67 L1.53 11.73 L2.47 10.49 L1.88 9.48 L0.35 9.67 L-0.00 8.38 L1.43 7.79 L1.43 6.61 L-0.00 6.02 L0.35 4.73 L1.88 4.92 L2.47 3.91 L1.53 2.67 L2.47 1.73 L3.71 2.67 L4.72 2.08 L4.53 0.55 L5.82 0.20 L6.41 1.63 L7.59 1.63 L8.18 0.20 L9.47 0.55 L9.28 2.08 L10.29 2.67 L11.53 1.73 L12.47 2.67 L11.53 3.91 L12.12 4.92 L13.65 4.73 L14.00 6.02 L12.57 6.61Z" fill="#89a8c9" stroke="#7190b4" stroke-width="0.5"/><circle cx="7.0" cy="7.2" r="5.5" fill="url(#r10l)"/><circle cx="7.0" cy="7.2" r="2.4" fill="#fff" stroke="#5f6f84" stroke-width="0.9"/><path d="M15.40 12.68 L16.39 12.96 L16.22 13.82 L15.19 13.70 L14.83 14.29 L15.41 15.14 L14.72 15.69 L14.02 14.94 L13.36 15.16 L13.25 16.18 L12.37 16.16 L12.32 15.13 L11.67 14.88 L10.93 15.59 L10.27 15.01 L10.89 14.19 L10.56 13.58 L9.53 13.65 L9.40 12.78 L10.40 12.55 L10.54 11.87 L9.71 11.26 L10.17 10.51 L11.09 10.98 L11.63 10.55 L11.38 9.55 L12.21 9.27 L12.62 10.22 L13.31 10.23 L13.76 9.31 L14.58 9.63 L14.28 10.61 L14.80 11.08 L15.74 10.66 L16.16 11.43 L15.30 11.99Z" fill="#89a8c9" stroke="#7190b4" stroke-width="0.4"/><circle cx="12.9" cy="12.7" r="2.0" fill="#ddecf8"/><circle cx="12.9" cy="12.7" r="1.0" fill="#fff" stroke="#5f6f84" stroke-width="0.5"/></svg>
<svg class="ico" style="left:344px;top:345px" width="17" height="17" viewBox="0 0 17 17"><defs><linearGradient id="r11l" x1="0" y1="0" x2="1" y2="1"><stop offset="0.15" stop-color="#ddecf8"/><stop offset="0.85" stop-color="#a6cbeb"/></linearGradient></defs><path d="M12.57 7.79 L14.00 8.38 L13.65 9.67 L12.12 9.48 L11.53 10.49 L12.47 11.73 L11.53 12.67 L10.29 11.73 L9.28 12.32 L9.47 13.85 L8.18 14.20 L7.59 12.77 L6.41 12.77 L5.82 14.20 L4.53 13.85 L4.72 12.32 L3.71 11.73 L2.47 12.67 L1.53 11.73 L2.47 10.49 L1.88 9.48 L0.35 9.67 L-0.00 8.38 L1.43 7.79 L1.43 6.61 L-0.00 6.02 L0.35 4.73 L1.88 4.92 L2.47 3.91 L1.53 2.67 L2.47 1.73 L3.71 2.67 L4.72 2.08 L4.53 0.55 L5.82 0.20 L6.41 1.63 L7.59 1.63 L8.18 0.20 L9.47 0.55 L9.28 2.08 L10.29 2.67 L11.53 1.73 L12.47 2.67 L11.53 3.91 L12.12 4.92 L13.65 4.73 L14.00 6.02 L12.57 6.61Z" fill="#89a8c9" stroke="#7190b4" stroke-width="0.5"/><circle cx="7.0" cy="7.2" r="5.5" fill="url(#r11l)"/><circle cx="7.0" cy="7.2" r="2.4" fill="#fff" stroke="#5f6f84" stroke-width="0.9"/><path d="M15.40 12.68 L16.39 12.96 L16.22 13.82 L15.19 13.70 L14.83 14.29 L15.41 15.14 L14.72 15.69 L14.02 14.94 L13.36 15.16 L13.25 16.18 L12.37 16.16 L12.32 15.13 L11.67 14.88 L10.93 15.59 L10.27 15.01 L10.89 14.19 L10.56 13.58 L9.53 13.65 L9.40 12.78 L10.40 12.55 L10.54 11.87 L9.71 11.26 L10.17 10.51 L11.09 10.98 L11.63 10.55 L11.38 9.55 L12.21 9.27 L12.62 10.22 L13.31 10.23 L13.76 9.31 L14.58 9.63 L14.28 10.61 L14.80 11.08 L15.74 10.66 L16.16 11.43 L15.30 11.99Z" fill="#89a8c9" stroke="#7190b4" stroke-width="0.4"/><circle cx="12.9" cy="12.7" r="2.0" fill="#ddecf8"/><circle cx="12.9" cy="12.7" r="1.0" fill="#fff" stroke="#5f6f84" stroke-width="0.5"/></svg>
<svg class="ico" style="left:344px;top:364px" width="17" height="17" viewBox="0 0 17 17"><defs><linearGradient id="r12l" x1="0" y1="0" x2="1" y2="1"><stop offset="0.15" stop-color="#ddecf8"/><stop offset="0.85" stop-color="#a6cbeb"/></linearGradient></defs><path d="M12.57 7.79 L14.00 8.38 L13.65 9.67 L12.12 9.48 L11.53 10.49 L12.47 11.73 L11.53 12.67 L10.29 11.73 L9.28 12.32 L9.47 13.85 L8.18 14.20 L7.59 12.77 L6.41 12.77 L5.82 14.20 L4.53 13.85 L4.72 12.32 L3.71 11.73 L2.47 12.67 L1.53 11.73 L2.47 10.49 L1.88 9.48 L0.35 9.67 L-0.00 8.38 L1.43 7.79 L1.43 6.61 L-0.00 6.02 L0.35 4.73 L1.88 4.92 L2.47 3.91 L1.53 2.67 L2.47 1.73 L3.71 2.67 L4.72 2.08 L4.53 0.55 L5.82 0.20 L6.41 1.63 L7.59 1.63 L8.18 0.20 L9.47 0.55 L9.28 2.08 L10.29 2.67 L11.53 1.73 L12.47 2.67 L11.53 3.91 L12.12 4.92 L13.65 4.73 L14.00 6.02 L12.57 6.61Z" fill="#89a8c9" stroke="#7190b4" stroke-width="0.5"/><circle cx="7.0" cy="7.2" r="5.5" fill="url(#r12l)"/><circle cx="7.0" cy="7.2" r="2.4" fill="#fff" stroke="#5f6f84" stroke-width="0.9"/><path d="M15.40 12.68 L16.39 12.96 L16.22 13.82 L15.19 13.70 L14.83 14.29 L15.41 15.14 L14.72 15.69 L14.02 14.94 L13.36 15.16 L13.25 16.18 L12.37 16.16 L12.32 15.13 L11.67 14.88 L10.93 15.59 L10.27 15.01 L10.89 14.19 L10.56 13.58 L9.53 13.65 L9.40 12.78 L10.40 12.55 L10.54 11.87 L9.71 11.26 L10.17 10.51 L11.09 10.98 L11.63 10.55 L11.38 9.55 L12.21 9.27 L12.62 10.22 L13.31 10.23 L13.76 9.31 L14.58 9.63 L14.28 10.61 L14.80 11.08 L15.74 10.66 L16.16 11.43 L15.30 11.99Z" fill="#89a8c9" stroke="#7190b4" stroke-width="0.4"/><circle cx="12.9" cy="12.7" r="2.0" fill="#ddecf8"/><circle cx="12.9" cy="12.7" r="1.0" fill="#fff" stroke="#5f6f84" stroke-width="0.5"/></svg>
<svg class="ico" style="left:344px;top:383px" width="17" height="17" viewBox="0 0 17 17"><defs><linearGradient id="r13l" x1="0" y1="0" x2="1" y2="1"><stop offset="0.15" stop-color="#ddecf8"/><stop offset="0.85" stop-color="#a6cbeb"/></linearGradient></defs><path d="M12.57 7.79 L14.00 8.38 L13.65 9.67 L12.12 9.48 L11.53 10.49 L12.47 11.73 L11.53 12.67 L10.29 11.73 L9.28 12.32 L9.47 13.85 L8.18 14.20 L7.59 12.77 L6.41 12.77 L5.82 14.20 L4.53 13.85 L4.72 12.32 L3.71 11.73 L2.47 12.67 L1.53 11.73 L2.47 10.49 L1.88 9.48 L0.35 9.67 L-0.00 8.38 L1.43 7.79 L1.43 6.61 L-0.00 6.02 L0.35 4.73 L1.88 4.92 L2.47 3.91 L1.53 2.67 L2.47 1.73 L3.71 2.67 L4.72 2.08 L4.53 0.55 L5.82 0.20 L6.41 1.63 L7.59 1.63 L8.18 0.20 L9.47 0.55 L9.28 2.08 L10.29 2.67 L11.53 1.73 L12.47 2.67 L11.53 3.91 L12.12 4.92 L13.65 4.73 L14.00 6.02 L12.57 6.61Z" fill="#89a8c9" stroke="#7190b4" stroke-width="0.5"/><circle cx="7.0" cy="7.2" r="5.5" fill="url(#r13l)"/><circle cx="7.0" cy="7.2" r="2.4" fill="#fff" stroke="#5f6f84" stroke-width="0.9"/><path d="M15.40 12.68 L16.39 12.96 L16.22 13.82 L15.19 13.70 L14.83 14.29 L15.41 15.14 L14.72 15.69 L14.02 14.94 L13.36 15.16 L13.25 16.18 L12.37 16.16 L12.32 15.13 L11.67 14.88 L10.93 15.59 L10.27 15.01 L10.89 14.19 L10.56 13.58 L9.53 13.65 L9.40 12.78 L10.40 12.55 L10.54 11.87 L9.71 11.26 L10.17 10.51 L11.09 10.98 L11.63 10.55 L11.38 9.55 L12.21 9.27 L12.62 10.22 L13.31 10.23 L13.76 9.31 L14.58 9.63 L14.28 10.61 L14.80 11.08 L15.74 10.66 L16.16 11.43 L15.30 11.99Z" fill="#89a8c9" stroke="#7190b4" stroke-width="0.4"/><circle cx="12.9" cy="12.7" r="2.0" fill="#ddecf8"/><circle cx="12.9" cy="12.7" r="1.0" fill="#fff" stroke="#5f6f84" stroke-width="0.5"/></svg>
<svg class="ico" style="left:344px;top:402px" width="17" height="17" viewBox="0 0 17 17"><defs><linearGradient id="r14l" x1="0" y1="0" x2="1" y2="1"><stop offset="0.15" stop-color="#ddecf8"/><stop offset="0.85" stop-color="#a6cbeb"/></linearGradient></defs><path d="M12.57 7.79 L14.00 8.38 L13.65 9.67 L12.12 9.48 L11.53 10.49 L12.47 11.73 L11.53 12.67 L10.29 11.73 L9.28 12.32 L9.47 13.85 L8.18 14.20 L7.59 12.77 L6.41 12.77 L5.82 14.20 L4.53 13.85 L4.72 12.32 L3.71 11.73 L2.47 12.67 L1.53 11.73 L2.47 10.49 L1.88 9.48 L0.35 9.67 L-0.00 8.38 L1.43 7.79 L1.43 6.61 L-0.00 6.02 L0.35 4.73 L1.88 4.92 L2.47 3.91 L1.53 2.67 L2.47 1.73 L3.71 2.67 L4.72 2.08 L4.53 0.55 L5.82 0.20 L6.41 1.63 L7.59 1.63 L8.18 0.20 L9.47 0.55 L9.28 2.08 L10.29 2.67 L11.53 1.73 L12.47 2.67 L11.53 3.91 L12.12 4.92 L13.65 4.73 L14.00 6.02 L12.57 6.61Z" fill="#89a8c9" stroke="#7190b4" stroke-width="0.5"/><circle cx="7.0" cy="7.2" r="5.5" fill="url(#r14l)"/><circle cx="7.0" cy="7.2" r="2.4" fill="#fff" stroke="#5f6f84" stroke-width="0.9"/><path d="M15.40 12.68 L16.39 12.96 L16.22 13.82 L15.19 13.70 L14.83 14.29 L15.41 15.14 L14.72 15.69 L14.02 14.94 L13.36 15.16 L13.25 16.18 L12.37 16.16 L12.32 15.13 L11.67 14.88 L10.93 15.59 L10.27 15.01 L10.89 14.19 L10.56 13.58 L9.53 13.65 L9.40 12.78 L10.40 12.55 L10.54 11.87 L9.71 11.26 L10.17 10.51 L11.09 10.98 L11.63 10.55 L11.38 9.55 L12.21 9.27 L12.62 10.22 L13.31 10.23 L13.76 9.31 L14.58 9.63 L14.28 10.61 L14.80 11.08 L15.74 10.66 L16.16 11.43 L15.30 11.99Z" fill="#89a8c9" stroke="#7190b4" stroke-width="0.4"/><circle cx="12.9" cy="12.7" r="2.0" fill="#ddecf8"/><circle cx="12.9" cy="12.7" r="1.0" fill="#fff" stroke="#5f6f84" stroke-width="0.5"/></svg>
<svg class="ico" style="left:344px;top:421px" width="17" height="17" viewBox="0 0 17 17"><defs><linearGradient id="r15l" x1="0" y1="0" x2="1" y2="1"><stop offset="0.15" stop-color="#ddecf8"/><stop offset="0.85" stop-color="#a6cbeb"/></linearGradient></defs><path d="M12.57 7.79 L14.00 8.38 L13.65 9.67 L12.12 9.48 L11.53 10.49 L12.47 11.73 L11.53 12.67 L10.29 11.73 L9.28 12.32 L9.47 13.85 L8.18 14.20 L7.59 12.77 L6.41 12.77 L5.82 14.20 L4.53 13.85 L4.72 12.32 L3.71 11.73 L2.47 12.67 L1.53 11.73 L2.47 10.49 L1.88 9.48 L0.35 9.67 L-0.00 8.38 L1.43 7.79 L1.43 6.61 L-0.00 6.02 L0.35 4.73 L1.88 4.92 L2.47 3.91 L1.53 2.67 L2.47 1.73 L3.71 2.67 L4.72 2.08 L4.53 0.55 L5.82 0.20 L6.41 1.63 L7.59 1.63 L8.18 0.20 L9.47 0.55 L9.28 2.08 L10.29 2.67 L11.53 1.73 L12.47 2.67 L11.53 3.91 L12.12 4.92 L13.65 4.73 L14.00 6.02 L12.57 6.61Z" fill="#89a8c9" stroke="#7190b4" stroke-width="0.5"/><circle cx="7.0" cy="7.2" r="5.5" fill="url(#r15l)"/><circle cx="7.0" cy="7.2" r="2.4" fill="#fff" stroke="#5f6f84" stroke-width="0.9"/><path d="M15.40 12.68 L16.39 12.96 L16.22 13.82 L15.19 13.70 L14.83 14.29 L15.41 15.14 L14.72 15.69 L14.02 14.94 L13.36 15.16 L13.25 16.18 L12.37 16.16 L12.32 15.13 L11.67 14.88 L10.93 15.59 L10.27 15.01 L10.89 14.19 L10.56 13.58 L9.53 13.65 L9.40 12.78 L10.40 12.55 L10.54 11.87 L9.71 11.26 L10.17 10.51 L11.09 10.98 L11.63 10.55 L11.38 9.55 L12.21 9.27 L12.62 10.22 L13.31 10.23 L13.76 9.31 L14.58 9.63 L14.28 10.61 L14.80 11.08 L15.74 10.66 L16.16 11.43 L15.30 11.99Z" fill="#89a8c9" stroke="#7190b4" stroke-width="0.4"/><circle cx="12.9" cy="12.7" r="2.0" fill="#ddecf8"/><circle cx="12.9" cy="12.7" r="1.0" fill="#fff" stroke="#5f6f84" stroke-width="0.5"/></svg>
<div style="left:912px;top:111px;width:16px;height:325px;background:#f0f0f0"></div>
<div style="left:912px;top:128px;width:15px;height:17px;background:#cdcdcd"></div>
<svg style="left:915px;top:116px" width="10" height="8" viewBox="0 0 10 8"><path d="M0.8 4.6L4.6 0.8L8.4 4.6L8.4 7L4.6 3.3L0.8 7Z" fill="#5c5c5c"/></svg>
<svg style="left:915px;top:424px" width="10" height="8" viewBox="0 0 10 8"><path d="M0.8 3.4L4.6 7.2L8.4 3.4L8.4 1L4.6 4.7L0.8 1Z" fill="#5c5c5c"/></svg>
<span class="tx row" id="t22" style="left:363.00px;top:137px;letter-spacing:-0.777px">AarSvc_2125c</span>
<span class="tx row" id="t23" style="left:479.50px;top:137px;letter-spacing:0.064px">Runtime for activating con...</span>
<span class="tx row" id="t24" style="left:738.00px;top:137px;letter-spacing:0.256px">Manuell</span>
<span class="tx row" id="t25" style="left:804.00px;top:137px;letter-spacing:-0.347px">Lokales System</span>
<span class="tx row" id="t26" style="left:363.00px;top:156px;letter-spacing:-0.123px">ACMP Client</span>
<span class="tx row" id="t27" style="left:479.50px;top:156px;letter-spacing:0.002px">Aagon Client Management...</span>
<span class="tx row" id="t28" style="left:645.00px;top:156px;letter-spacing:-0.048px">Wird ausgefü...</span>
<span class="tx row" id="t29" style="left:737.40px;top:156px;letter-spacing:0.297px">Automa...</span>
<span class="tx row" id="t30" style="left:804.00px;top:156px;letter-spacing:-0.347px">Lokales System</span>
<span class="tx row" id="t31" style="left:363.00px;top:175px;letter-spacing:-0.093px">ACMP Network Bo...</span>
<span class="tx row" id="t32" style="left:479.50px;top:175px;letter-spacing:0.002px">Aagon Client Management...</span>
<span class="tx row" id="t33" style="left:645.00px;top:175px;letter-spacing:-0.048px">Wird ausgefü...</span>
<span class="tx row" id="t34" style="left:737.40px;top:175px;letter-spacing:0.297px">Automa...</span>
<span class="tx row" id="t35" style="left:804.00px;top:175px;letter-spacing:-0.347px">Lokales System</span>
<span class="tx sel row" id="t36" style="left:363.00px;top:194px;letter-spacing:-0.484px">ACMP Server</span>
<span class="tx sel row" id="t37" style="left:479.50px;top:194px;letter-spacing:0.002px">Aagon Client Management...</span>
<span class="tx sel row" id="t38" style="left:645.00px;top:194px;letter-spacing:-0.048px">Wird ausgefü...</span>
<span class="tx sel row" id="t39" style="left:737.40px;top:194px;letter-spacing:0.297px">Automa...</span>
<span class="tx sel row" id="t40" style="left:804.00px;top:194px;letter-spacing:-0.347px">Lokales System</span>
<span class="tx row" id="t41" style="left:363.00px;top:213px;letter-spacing:-0.162px">ActiveX-Installer (...</span>
<span class="tx row" id="t42" style="left:479.50px;top:213px;letter-spacing:-0.221px">Bietet eine Bewertung der B...</span>
<span class="tx row" id="t43" style="left:738.00px;top:213px;letter-spacing:0.256px">Manuell</span>
<span class="tx row" id="t44" style="left:804.00px;top:213px;letter-spacing:-0.347px">Lokales System</span>
<span class="tx row" id="t45" style="left:363.00px;top:232px;letter-spacing:-0.215px">AllJoyn-Routerdie...</span>
<span class="tx row" id="t46" style="left:479.50px;top:232px;letter-spacing:0.094px">Leitet AllJoyn-Mitteilungen...</span>
<span class="tx row" id="t47" style="left:738.00px;top:232px;letter-spacing:0.078px">Manuell...</span>
<span class="tx row" id="t48" style="left:804.00px;top:232px;letter-spacing:-0.245px">Lokaler Dienst</span>
<span class="tx row" id="t49" style="left:363.00px;top:251px;letter-spacing:-0.043px">Anmelde-Assistent...</span>
<span class="tx row" id="t50" style="left:479.50px;top:251px;letter-spacing:-0.096px">Ermöglicht Benutzeranmel...</span>
<span class="tx row" id="t51" style="left:738.00px;top:251px;letter-spacing:0.078px">Manuell...</span>
<span class="tx row" id="t52" style="left:804.00px;top:251px;letter-spacing:-0.347px">Lokales System</span>
<span class="tx row" id="t53" style="left:363.00px;top:270px;letter-spacing:-0.138px">Anmeldedienst</span>
<span class="tx row" id="t54" style="left:479.50px;top:270px;letter-spacing:-0.245px">Unterstützt einen sicheren ...</span>
<span class="tx row" id="t55" style="left:738.00px;top:270px;letter-spacing:0.256px">Manuell</span>
<span class="tx row" id="t56" style="left:804.00px;top:270px;letter-spacing:-0.347px">Lokales System</span>
<span class="tx row" id="t57" style="left:363.00px;top:289px;letter-spacing:0.164px">Anmeldeinformati...</span>
<span class="tx row" id="t58" style="left:479.50px;top:289px;letter-spacing:-0.221px">Ermöglicht das sichere Spei...</span>
<span class="tx row" id="t59" style="left:645.00px;top:289px;letter-spacing:-0.048px">Wird ausgefü...</span>
<span class="tx row" id="t60" style="left:738.00px;top:289px;letter-spacing:0.256px">Manuell</span>
<span class="tx row" id="t61" style="left:804.00px;top:289px;letter-spacing:-0.347px">Lokales System</span>
<span class="tx row" id="t62" style="left:363.00px;top:308px;letter-spacing:0.008px">Anschlussumleitu...</span>
<span class="tx row" id="t63" style="left:479.50px;top:308px;letter-spacing:0.043px">Ermöglicht die Umleitung v...</span>
<span class="tx row" id="t64" style="left:738.00px;top:308px;letter-spacing:0.256px">Manuell</span>
<span class="tx row" id="t65" style="left:804.00px;top:308px;letter-spacing:-0.347px">Lokales System</span>
<span class="tx row" id="t66" style="left:363.00px;top:327px;letter-spacing:0.064px">Anwendungsidenti...</span>
<span class="tx row" id="t67" style="left:479.50px;top:327px;letter-spacing:0.112px">Bestimmt und überprüft di...</span>
<span class="tx row" id="t68" style="left:738.00px;top:327px;letter-spacing:0.078px">Manuell...</span>
<span class="tx row" id="t69" style="left:804.00px;top:327px;letter-spacing:-0.245px">Lokaler Dienst</span>
<span class="tx row" id="t70" style="left:363.00px;top:346px;letter-spacing:0.103px">Anwendungsinfor...</span>
<span class="tx row" id="t71" style="left:479.50px;top:346px;letter-spacing:-0.072px">Erleichtert das Ausführen v...</span>
<span class="tx row" id="t72" style="left:645.00px;top:346px;letter-spacing:-0.048px">Wird ausgefü...</span>
<span class="tx row" id="t73" style="left:738.00px;top:346px;letter-spacing:0.078px">Manuell...</span>
<span class="tx row" id="t74" style="left:804.00px;top:346px;letter-spacing:-0.347px">Lokales System</span>
<span class="tx row" id="t75" style="left:363.00px;top:365px;letter-spacing:-0.014px">Anwendungsverw...</span>
<span class="tx row" id="t76" style="left:479.50px;top:365px;letter-spacing:-0.118px">Verarbeitet Installations-, D...</span>
<span class="tx row" id="t77" style="left:738.00px;top:365px;letter-spacing:0.256px">Manuell</span>
<span class="tx row" id="t78" style="left:804.00px;top:365px;letter-spacing:-0.347px">Lokales System</span>
<span class="tx row" id="t79" style="left:363.00px;top:384px;letter-spacing:-0.011px">Anzeigerichtlinien...</span>
<span class="tx row" id="t80" style="left:479.50px;top:384px;letter-spacing:-0.084px">Verwaltet die Verbindung u...</span>
<span class="tx row" id="t81" style="left:645.00px;top:384px;letter-spacing:-0.048px">Wird ausgefü...</span>
<span class="tx row" id="t82" style="left:737.40px;top:384px;letter-spacing:0.297px">Automa...</span>
<span class="tx row" id="t83" style="left:804.00px;top:384px;letter-spacing:-0.245px">Lokaler Dienst</span>
<span class="tx row" id="t84" style="left:363.00px;top:403px;letter-spacing:-0.305px">Anzeigeverbesseru...</span>
<span class="tx row" id="t85" style="left:479.50px;top:403px;letter-spacing:-0.175px">Ein Dienst zur Verwaltung d...</span>
<span class="tx row" id="t86" style="left:738.00px;top:403px;letter-spacing:0.078px">Manuell...</span>
<span class="tx row" id="t87" style="left:804.00px;top:403px;letter-spacing:-0.347px">Lokales System</span>
<span class="tx row" id="t88" style="left:363.00px;top:422px;letter-spacing:0.051px">App-Vorbereitung</span>
<span class="tx row" id="t89" style="left:479.50px;top:422px;letter-spacing:-0.121px">Bereitet Apps zur sofortige...</span>
<span class="tx row" id="t90" style="left:738.00px;top:422px;letter-spacing:0.256px">Manuell</span>
<span class="tx row" id="t91" style="left:804.00px;top:422px;letter-spacing:-0.347px">Lokales System</span>
<div style="left:123px;top:438px;width:807px;height:19px;background:#f0f0f0"></div>
<svg style="left:123px;top:436px" width="807" height="22" viewBox="0 0 807 22"><path d="M75.5 2.5L807 2.5" stroke="#696969" fill="none"/><path d="M67 2.5L136.5 2.5L129.5 20.5L76.5 20.5Z" fill="#f0f0f0" stroke="#696969"/><path d="M3 0.5L75.5 0.5L67.5 20.5L11.5 20.5Z" fill="#fff" stroke="none"/><path d="M3.5 1L11.5 20.5M75.5 1.5L67.5 20.5" stroke="#404040" fill="none"/><path d="M11.5 20.5L67.5 20.5" stroke="#a0a0a0" fill="none"/></svg>
<div style="left:2px;top:457px;width:928px;height:22px;background:#f0f0f0"></div>
<div style="left:2px;top:457px;width:928px;height:1px;background:#dcdcdc"></div>
<div style="left:709px;top:459px;width:1px;height:20px;background:#d7d7d7"></div>
<div style="left:842px;top:459px;width:1px;height:20px;background:#d7d7d7"></div>
<div style="left:927px;top:459px;width:1px;height:20px;background:#d7d7d7"></div>
<div style="left:1px;top:479px;width:929px;height:1px;background:#fff"></div>
<span class="tx" id="t0" style="left:29.50px;top:9px;letter-spacing:-0.152px">Dienste</span>
<span class="tx" id="t1" style="left:10.80px;top:35px;letter-spacing:0.038px">Datei</span>
<span class="tx" id="t2" style="left:53.50px;top:35px;letter-spacing:0.403px">Aktion</span>
<span class="tx" id="t3" style="left:105.50px;top:35px;letter-spacing:-0.171px">Ansicht</span>
<span class="tx" id="t4" style="left:160.30px;top:35px;letter-spacing:0.000px">?</span>
<span class="tx" id="t5" style="left:27.50px;top:87px;letter-spacing:-0.279px">Dienste (Lokal)</span>
<span class="tx" id="t6" style="left:162.30px;top:91px;letter-spacing:-0.101px">Dienste (Lokal)</span>
<span class="tx b" id="t7" style="left:133.00px;top:116px;letter-spacing:-0.146px">ACMP Server</span>
<span class="tx" id="t8" style="left:132.00px;top:149px;letter-spacing:-0.193px">Den Dienst</span>
<a class="tx lnk" id="t9" style="left:192.30px;top:149px;letter-spacing:0.059px">beenden</a>
<span class="tx" id="t10" style="left:132.00px;top:164px;letter-spacing:-0.193px">Den Dienst</span>
<a class="tx lnk" id="t11" style="left:192.30px;top:164px;letter-spacing:0.003px">neu starten</a>
<span class="tx" id="t12" style="left:132.00px;top:209px;letter-spacing:-0.007px">Beschreibung:</span>
<span class="tx" id="t13" style="left:133.00px;top:224px;letter-spacing:0.045px">Aagon Client Management Platform</span>
<span class="tx" id="t14" style="left:132.00px;top:239px;letter-spacing:-0.490px">Server</span>
<span class="tx" id="t15" style="left:139.60px;top:440px;letter-spacing:-0.264px">Erweitert</span>
<span class="tx" id="t16" style="left:201.30px;top:440px;letter-spacing:0.010px">Standard</span>
<span class="tx" id="t17" style="left:346.00px;top:115px;letter-spacing:0.153px">Name</span>
<span class="tx" id="t18" style="left:479.50px;top:115px;letter-spacing:-0.156px">Beschreibung</span>
<span class="tx" id="t19" style="left:645.00px;top:115px;letter-spacing:-0.146px">Status</span>
<span class="tx" id="t20" style="left:738.00px;top:115px;letter-spacing:-0.069px">Starttyp</span>
<span class="tx" id="t21" style="left:804.30px;top:115px;letter-spacing:-0.102px">Anmelden als</span>
</body></html>
